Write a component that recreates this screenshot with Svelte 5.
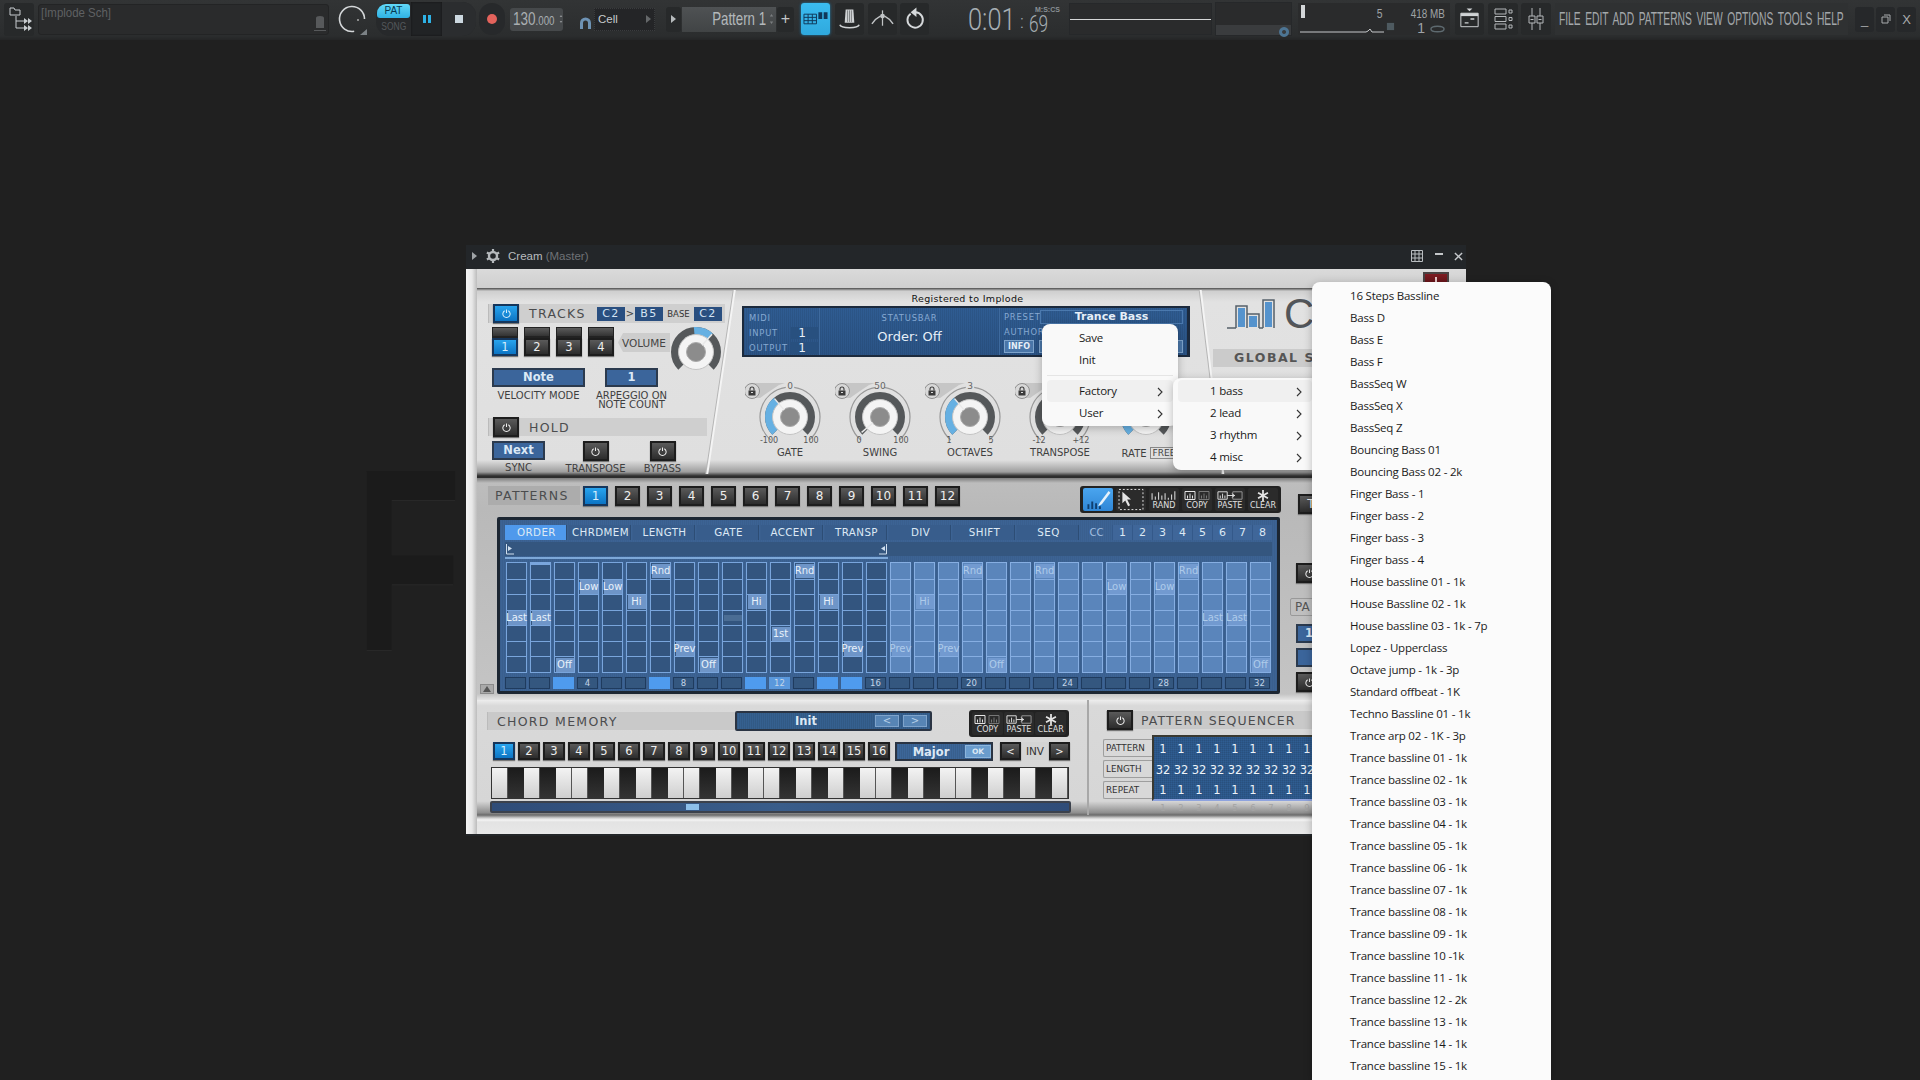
<script>
    const pt = (cx, cy, r, deg) => {
        const a = ((deg - 90) * Math.PI) / 180;
        return [cx + r * Math.cos(a), cy + r * Math.sin(a)];
    };
    const arc = (cx, cy, r, from, to) => {
        const [x0, y0] = pt(cx, cy, r, from);
        const [x1, y1] = pt(cx, cy, r, to);
        return `M${x0.toFixed(2)} ${y0.toFixed(2)}A${r} ${r} 0 ${to - from > 180 ? 1 : 0} 1 ${x1.toFixed(2)} ${y1.toFixed(2)}`;
    };
    const needle = (cx, cy, deg) => {
        const [x0, y0] = pt(cx, cy, 9, deg);
        const [x1, y1] = pt(cx, cy, 24, deg);
        return `M${x0.toFixed(2)} ${y0.toFixed(2)}L${x1.toFixed(2)} ${y1.toFixed(2)}`;
    };

    const knobs = [
        { label: 'GATE', min: '-100', max: '100', top: '0', angle: -40 },
        { label: 'SWING', min: '0', max: '100', top: '50', angle: -130 },
        { label: 'OCTAVES', min: '1', max: '5', top: '3', angle: -40 },
        { label: 'TRANSPOSE', min: '-12', max: '+12', top: '', angle: 0 }
    ];

    // step values: [row, text], one per column
    const steps = [
        [3, 'Last'], [3, 'Last'], [6, 'Off'], [1, 'Low'], [1, 'Low'], [2, 'Hi'], [0, 'Rnd'], [5, 'Prev'],
        [6, 'Off'], [3, ''], [2, 'Hi'], [4, '1st'], [0, 'Rnd'], [2, 'Hi'], [5, 'Prev'], null,
        [5, 'Prev'], [2, 'Hi'], [5, 'Prev'], [0, 'Rnd'], [6, 'Off'], null, [0, 'Rnd'], null,
        null, [1, 'Low'], null, [1, 'Low'], [0, 'Rnd'], [3, 'Last'], [3, 'Last'], [6, 'Off']
    ];
    const rows = [0, 1, 2, 3, 4, 5, 6];
    const lit = [3, 7, 11, 12, 14, 15];
    const tabs = ['ORDER', 'CHRDMEM', 'LENGTH', 'GATE', 'ACCENT', 'TRANSP', 'DIV', 'SHIFT', 'SEQ'];
    const blackKeys = [1, 3, 6, 8, 10];
    const keys = Array.from({ length: 36 }, (_, i) => blackKeys.includes(i % 12));
    const seqCols = [1, 2, 3, 4, 5, 6, 7, 8, 9];

    const presets = [
        '16 Steps Bassline', 'Bass D', 'Bass E', 'Bass F', 'BassSeq W', 'BassSeq X', 'BassSeq Z',
        'Bouncing Bass 01', 'Bouncing Bass 02 - 2k', 'Finger Bass - 1', 'Finger bass - 2', 'Finger bass - 3',
        'Finger bass - 4', 'House bassline 01 - 1k', 'House Bassline 02 - 1k', 'House bassline 03 - 1k - 7p',
        'Lopez - Upperclass', 'Octave jump - 1k - 3p', 'Standard offbeat - 1K', 'Techno Bassline 01 - 1k',
        'Trance arp 02 - 1K - 3p', 'Trance bassline 01 - 1k', 'Trance bassline 02 - 1k', 'Trance bassline 03 - 1k',
        'Trance bassline 04 - 1k', 'Trance bassline 05 - 1k', 'Trance bassline 06 - 1k', 'Trance bassline 07 - 1k',
        'Trance bassline 08 - 1k', 'Trance bassline 09 - 1k', 'Trance bassline 10 -1k', 'Trance bassline 11 - 1k',
        'Trance bassline 12 - 2k', 'Trance bassline 13 - 1k', 'Trance bassline 14 - 1k', 'Trance bassline 15 - 1k'
    ];
</script>

{#snippet power()}
    <svg class="power" viewBox="0 0 12 12">
        <path d="M4 3a4 4 0 1 0 4 0M6 1.5v4" fill="none" stroke="currentColor" stroke-width="1.1" />
    </svg>
{/snippet}

{#snippet dial(cx, cy, angle, from)}
    <path d={arc(cx, cy, 21, -135, 135)} fill="none" stroke="#55585a" stroke-width="8" />
    {#if from !== null}
        <path d={arc(cx, cy, 21, from, angle)} fill="none" stroke="#66b0e2" stroke-width="8" />
    {/if}
    <circle {cx} {cy} r="17.5" fill="#f4f4f4" stroke="#c4c4c4" />
    <circle {cx} {cy} r="9.5" fill="#8c8c8c" stroke="#aaa" />
    <path d={needle(cx, cy, angle)} stroke="#e9e9e9" stroke-width="1.5" />
{/snippet}

{#snippet arrow()}
    <svg class="arrow" viewBox="0 0 6 10"><path d="M1 1l4 4-4 4" fill="none" stroke="#333" stroke-width="1.1" /></svg>
{/snippet}

<div class="screen">
    <header class="toolbar">
        <div class="tb-btn browser">
            <svg viewBox="0 0 30 33">
                <path d="M6 5h4l1 2h5v5H6z" fill="none" stroke="#c9cdd0" />
                <path d="M12 13v12h8M12 18h8" fill="none" stroke="#c9cdd0" />
                <path d="M20 15v6l4-3zM24 15v6l4-3zM20 22v6l4-3zM24 22v6l4-3z" fill="#c9cdd0" />
            </svg>
        </div>
        <div class="hint">
            <span class="hint-text">[Implode Sch]</span>
            <svg class="hint-icon" viewBox="0 0 12 16">
                <path d="M2 13h8V3a4 2 0 0 0-8 0zM0 15h12v1H0z" fill="#57595b" />
            </svg>
        </div>
        <svg class="master" viewBox="0 0 30 34">
            <path d={arc(15, 17, 12.5, 170, 450)} fill="none" stroke="#d4d7d9" stroke-width="1.6" />
            <circle cx="21" cy="18" r="1" fill="#aaa" />
            <path d="M30 27v6h-7z" fill="#7c8286" />
        </svg>
        <div class="transport">
            <div class="patsong">
                <span class="pat">PAT</span>
                <span class="song">SONG</span>
            </div>
            <div class="play">
                <svg viewBox="0 0 10 10"><path d="M1 1h3v8H1zM6 1h3v8H6z" fill="#2eb2e6" /></svg>
            </div>
            <div class="stop"><span></span></div>
        </div>
        <div class="record"><span></span></div>
        <div class="tempo">
            <span class="tempo-num">130<small>.000</small></span>
            <svg viewBox="0 0 6 14"><path d="M3 1l2 3H1zM3 13l2-3H1z" fill="#8e9294" /></svg>
        </div>
        <svg class="magnet" viewBox="0 0 17 14">
            <path d="M3 13V7a5.500 5.500 0 0 1 11 0v6h-3V7a2.500 2.500 0 0 0-5 0v6z" fill="#6e93b5" />
        </svg>
        <div class="cell">
            <span>Cell</span>
            <svg viewBox="0 0 5 8"><path d="M0 0l5 4-5 4z" fill="#65686a" /></svg>
        </div>
        <div class="pat-arrow"><svg viewBox="0 0 5 8"><path d="M0 0l5 4-5 4z" fill="#b6babc" /></svg></div>
        <div class="pattern">
            <span class="pattern-name">Pattern 1</span>
            <svg viewBox="0 0 6 14"><path d="M3 1l2 3H1zM3 13l2-3H1z" fill="#7b7e80" /></svg>
        </div>
        <div class="pat-plus">+</div>
        <div class="tb-btn big on">
            <svg viewBox="0 0 26 16">
                <path d="M1 3h13v10H1zM1 6.300h13M1 9.700h13M5.300 3v10M9.700 3v10" fill="none" stroke="#10385a" />
                <path d="M16 1h4v7h-4zM21.500 1h4v7h-4z" fill="#10385a" />
            </svg>
        </div>
        <div class="tb-btn big gap5">
            <svg viewBox="0 0 26 26">
                <path d="M9 3h8l1 14H8z" fill="#cfd2d4" />
                <path d="M11 4v12M13 4v12M15 4v12" stroke="#7d8082" />
                <path d="M3 19c1 4 19 4 20 0" fill="none" stroke="#cfd2d4" stroke-width="1.6" />
            </svg>
        </div>
        <div class="tb-btn big gap4">
            <svg viewBox="0 0 26 26">
                <path d="M2 18c4-6 7-7 9-8M24 18c-4-6-7-7-9-8" fill="none" stroke="#c1c4c6" stroke-width="1.5" />
                <path d="M13 4v16" stroke="#c1c4c6" stroke-width="1.3" />
                <circle cx="13" cy="10" r="2.500" fill="#c1c4c6" />
            </svg>
        </div>
        <div class="tb-btn big gap3">
            <svg viewBox="0 0 26 26">
                <path d="M9 7.500a8 8 0 1 0 5-1.500" fill="none" stroke="#d6d9db" stroke-width="2" />
                <path d="M15 1v10l-6-5z" fill="#d6d9db" />
            </svg>
        </div>
        <div class="time">
            <span class="time-main">0:01</span>
            <span class="time-colon">:</span>
            <span class="time-cs">69</span>
            <span class="time-unit">M:S:CS</span>
        </div>
        <div class="scope"><span></span></div>
        <div class="scope2">
            <svg viewBox="0 0 12 12"><path d="M6 1a5 5 0 1 0 .1 0zM6 4a2 2 0 1 0 .1 0z" fill="#4d7594" fill-rule="evenodd" /></svg>
        </div>
        <div class="cpu">
            <span class="cpu-bar"></span>
            <span class="cpu-num">5</span>
            <svg class="cpu-chip" viewBox="0 0 10 10"><path d="M1 1h8v8H1z" fill="#4e5a60" /></svg>
            <span class="cpu-mem">418 MB</span>
            <span class="cpu-one">1</span>
            <svg class="cpu-ring" viewBox="0 0 16 8"><ellipse cx="8" cy="4" rx="7" ry="3" fill="none" stroke="#5e6a70" stroke-width="1.500" /></svg>
            <svg class="cpu-line" viewBox="0 0 84 6"><path d="M0 4h66l2-1 2-2 2 3h12" fill="none" stroke="#c5c8ca" /></svg>
        </div>
        <div class="tb-btn big gap5">
            <svg viewBox="0 0 26 26">
                <path d="M10 2h6l-3 3z" fill="#d0d3d5" />
                <path d="M4 7h18v14H4z" fill="none" stroke="#d0d3d5" />
                <path d="M4 7h18v3H4z" fill="#d0d3d5" />
                <path d="M8 17h4M14 13h4" stroke="#d0d3d5" stroke-width="1.500" />
            </svg>
        </div>
        <div class="tb-btn big gap4 w30">
            <svg viewBox="0 0 26 26">
                <path d="M5 3h11v5H5zM5 10.500h11v5H5zM5 18h11v5H5zM19 4h3v3h-3zM19 11.500h3v3h-3zM19 19h3v3h-3z" fill="none" stroke="#b5b8ba" />
            </svg>
        </div>
        <div class="tb-btn big gap3 w30">
            <svg viewBox="0 0 26 26">
                <path d="M9 2v8M17 2v8M9 17v7M17 17v7" stroke="#b5b8ba" />
                <path d="M6 10h6v7H6zM14 10h6v7h-6z" fill="none" stroke="#b5b8ba" />
                <path d="M7.500 13.500h3M15.500 13.500h3" stroke="#b5b8ba" />
            </svg>
        </div>
        <nav class="menubar"><span>FILE EDIT ADD PATTERNS VIEW OPTIONS TOOLS HELP</span></nav>
        <div class="winbtns">
            <span class="wb">_</span>
            <span class="wb">
                <svg viewBox="0 0 10 10"><path d="M1 3h6v6H1zM3 1h6v6" fill="none" stroke="#a8abad" /></svg>
            </span>
            <span class="wb">X</span>
        </div>
    </header>

    <div class="watermark">F</div>

    <section class="window">
        <div class="titlebar">
            <svg class="title-tri" viewBox="0 0 5 8"><path d="M0 0l5 4-5 4z" fill="#a0a4a7" /></svg>
            <svg class="title-gear" viewBox="0 0 14 14">
                <circle cx="7" cy="7" r="4" fill="none" stroke="#b5b9bc" stroke-width="2.400" />
                <path d="M7 0v3M7 11v3M0.900 3.500l2.600 1.500M10.500 9l2.600 1.500M0.900 10.500l2.600-1.500M10.500 5l2.600-1.500" stroke="#b5b9bc" stroke-width="2.200" />
            </svg>
            <span class="title-name">Cream <em>(Master)</em></span>
            <svg class="title-grid" viewBox="0 0 12 12">
                <path d="M.5.5h11v11H.5zM.5 4h11M.5 8h11M4 .5v11M8 .5v11" fill="none" stroke="#b9bdc0" />
            </svg>
            <span class="title-min"></span>
            <svg class="title-close" viewBox="0 0 10 10"><path d="M1 1l8 8M9 1l-8 8" stroke="#c4c7ca" stroke-width="1.600" /></svg>
        </div>

        <div class="plugin">
            <div class="head"><span class="red-btn"><i></i></span></div>

            <div class="main">
                <div class="col-left">
                    <div class="strip tracks-strip">
                        <span class="btn on sq">{@render power()}</span>
                        <span class="strip-label tracks-label">TRACKS</span>
                        <span class="note-box">C2</span>
                        <span class="gt">&gt;</span>
                        <span class="note-box">B5</span>
                        <span class="base">BASE</span>
                        <span class="note-box">C2</span>
                    </div>
                    <div class="tracks-row">
                        {#each [1, 2, 3, 4] as n}
                            <div class="track">
                                <span class="track-led"></span>
                                <span class="btn track-num" class:on={n === 1}>{n}</span>
                            </div>
                        {/each}
                        <span class="volume">VOLUME</span>
                        <svg class="vol-knob" viewBox="0 0 60 60">
                            {@render dial(30, 30, 42, -5)}
                        </svg>
                    </div>
                    <div class="modes">
                        <div class="cell-col w93">
                            <span class="blue-box">Note</span>
                            <span class="caption">VELOCITY MODE</span>
                        </div>
                        <div class="cell-col w53">
                            <span class="blue-box">1</span>
                            <span class="caption">ARPEGGIO ON<br />NOTE COUNT</span>
                        </div>
                    </div>
                    <div class="strip hold-strip">
                        <span class="btn sq tall">{@render power()}</span>
                        <span class="strip-label tracks-label">HOLD</span>
                    </div>
                    <div class="sync-row">
                        <div class="cell-col w53">
                            <span class="blue-box">Next</span>
                            <span class="caption">SYNC</span>
                        </div>
                        <div class="cell-col w27 ml37">
                            <span class="btn sq tall">{@render power()}</span>
                            <span class="caption">TRANSPOSE</span>
                        </div>
                        <div class="cell-col w27 ml40">
                            <span class="btn sq tall">{@render power()}</span>
                            <span class="caption">BYPASS</span>
                        </div>
                    </div>
                </div>

                <div class="col-mid">
                    <div class="registered">Registered to Implode</div>
                    <div class="display">
                        <div class="midi">
                            <span class="disp-label">MIDI</span>
                            <div class="midi-row"><span class="disp-label">INPUT</span><b>1</b></div>
                            <div class="midi-row"><span class="disp-label">OUTPUT</span><b>1</b></div>
                        </div>
                        <div class="status">
                            <span class="disp-label">STATUSBAR</span>
                            <span class="status-text">Order: Off</span>
                        </div>
                        <div class="preset">
                            <div class="preset-row"><span class="disp-label">PRESET</span><span class="preset-name">Trance Bass</span></div>
                            <div class="preset-row"><span class="disp-label">AUTHOR</span></div>
                            <div class="preset-row"><span class="info">INFO</span><span class="info wide"></span></div>
                        </div>
                    </div>
                    <div class="knob-row">
                        {#each knobs as k}
                            <div class="knob">
                                <svg viewBox="0 0 90 64">
                                    <path d="M7 1H40L34 3 25 9 15 16H7z" fill="#c6c6c6" />
                                    <circle cx="7" cy="9" r="7.500" fill="#d8d8d8" stroke="#8f8f8f" />
                                    <path d="M3.500 8.500h7v5h-7z" fill="#3a3a3a" />
                                    <path d="M5 8.500V7a2 2 0 0 1 4 0v1.500" fill="none" stroke="#3a3a3a" stroke-width="1.100" />
                                    <path d="M6 10.500h2" stroke="#ddd" />
                                    <path d={arc(45, 35, 30, -140, -8)} fill="none" stroke="#999" stroke-width="1.200" />
                                    <path d={arc(45, 35, 30, 8, 140)} fill="none" stroke="#999" stroke-width="1.200" />
                                    {@render dial(45, 35, k.angle, k.angle > -100 && k.angle !== 0 ? -135 : null)}
                                    <text class="knob-top" x="45" y="7">{k.top}</text>
                                    <text class="knob-min" x="24" y="61">{k.min}</text>
                                    <text class="knob-min" x="66" y="61">{k.max}</text>
                                </svg>
                                <span class="caption knob-label">{k.label}</span>
                            </div>
                        {/each}
                        <div class="knob">
                            <svg viewBox="0 0 90 64">
                                {@render dial(41, 35, -30, -135)}
                            </svg>
                            <div class="rate"><span class="caption">RATE</span><span class="free">FREE</span></div>
                        </div>
                    </div>
                </div>

                <div class="col-right">
                    <div class="brand">
                        <svg viewBox="0 0 51 31">
                            <path d="M0 30H9M9 30V8H20V30M20 30V16H32V30M36 30V2H47V30" fill="none" stroke="#55606a" stroke-width="1.500" />
                            <path d="M11 10h7v19h-7zM22 18h8v11h-8zM38 4h7v25h-7z" fill="#5593cd" />
                            <path d="M32 30h4" stroke="#55606a" stroke-width="1.500" />
                        </svg>
                        <span>C</span>
                        <i class="brand-cut"></i>
                    </div>
                    <div class="global"><span>GLOBAL SE</span></div>
                </div>
                <i class="slant slant-a"></i>
                <i class="slant slant-b"></i>
            </div>

            <div class="patterns">
                <div class="pat-top">
                    <div class="strip pat-strip"><span class="strip-label">PATTERNS</span></div>
                    <div class="pat-nums">
                        {#each Array.from({ length: 12 }, (_, i) => i + 1) as n}
                            <span class="btn pat-num" class:on={n === 1}>{n}</span>
                        {/each}
                    </div>
                    <div class="tools">
                        <span class="tool pen">
                            <svg viewBox="0 0 28 24">
                                <path d="M3 22v-5h2v5zM7 22v-8h2v8zM11 22v-6h2v6zM15 22v-3h2v3z" fill="#0f3f70" />
                                <path d="M14 19l2-4L25 3l2 2-9 12z" fill="#e7f2fb" />
                            </svg>
                        </span>
                        <span class="tool select">
                            <svg viewBox="0 0 28 24">
                                <path d="M1.500 1.500h25v21h-25z" fill="none" stroke="#e4e4e4" stroke-dasharray="2 2" />
                                <path d="M5 4v12l3-3 3 6 2-1-3-6h4z" fill="#e4e4e4" />
                            </svg>
                        </span>
                        <span class="tool labeled">
                            <svg viewBox="0 0 24 10"><path d="M1 9V3M4 9V6M7 9V2M10 9V5M13 9V3M16 9V7M19 9V4M22 9V1" stroke="#d5d5d5" /></svg>
                            RAND
                        </span>
                        <span class="tool labeled">
                            <svg viewBox="0 0 26 10">
                                <path d="M1 1h10v8H1z" fill="none" stroke="#e4e4e4" />
                                <path d="M15 1h10v8H15z" fill="none" stroke="#777" />
                                <path d="M3.500 8V5M6 8V3M8.500 8V5" stroke="#e4e4e4" />
                                <path d="M17.500 8V5M20 8V3M22.500 8V5" stroke="#777" />
                            </svg>
                            COPY
                        </span>
                        <span class="tool labeled">
                            <svg viewBox="0 0 28 10">
                                <path d="M1 1h10v8H1z" fill="none" stroke="#e4e4e4" />
                                <path d="M17 1h10v8H17z" fill="none" stroke="#999" />
                                <path d="M3.500 8V5M6 8V3M8.500 8V5M11 5h8M16 3l3 2-3 2" fill="none" stroke="#e4e4e4" />
                            </svg>
                            PASTE
                        </span>
                        <span class="tool labeled">
                            <svg viewBox="0 0 12 10"><path d="M6 0v10M1.500 2.500l9 5M10.500 2.500l-9 5" stroke="#e4e4e4" stroke-width="1.600" /></svg>
                            CLEAR
                        </span>
                    </div>
                    <span class="btn stub stub-t">T</span>
                </div>

                <div class="seq-row">
                    <span class="scroll-up"><svg viewBox="0 0 8 6"><path d="M4 0l4 6H0z" fill="#555" /></svg></span>
                    <div class="seq">
                        <div class="tabs">
                            {#each tabs as t, i}
                                <span class="tab" class:active={i === 0}>{t}</span>
                            {/each}
                            <span class="cc">CC</span>
                            {#each [1, 2, 3, 4, 5, 6, 7, 8] as c}
                                <span class="cc-cell">{c}</span>
                            {/each}
                        </div>
                        <div class="range">
                            <svg class="mark" viewBox="0 0 10 14">
                                <path d="M1.500 2v10H9" fill="none" stroke="#cfdeee" />
                                <path d="M3 4v5l4-2.500z" fill="#cfdeee" />
                            </svg>
                            <svg class="mark mark-end" viewBox="0 0 10 14">
                                <path d="M8.500 2v10H1" fill="none" stroke="#cfdeee" />
                                <path d="M7 4v5L3 6.500z" fill="#cfdeee" />
                            </svg>
                        </div>
                        <div class="range-line"></div>
                        <div class="columns">
                            {#each steps as s, c}
                                <div class="col" class:second={c >= 16}>
                                    {#if c === 1}<i class="col-top"></i>{/if}
                                    {#each rows as r}
                                        <div class="step">
                                            {#if s && s[0] === r}
                                                <span class="val" class:faint={s[1] === ''}>{s[1]}</span>
                                            {/if}
                                        </div>
                                    {/each}
                                </div>
                            {/each}
                        </div>
                        <div class="bottom">
                            {#each steps as _, c}
                                <span class="bot" class:lit={lit.includes(c + 1)} class:twelve={c === 11}>
                                    {(c + 1) % 4 === 0 ? c + 1 : ''}
                                </span>
                            {/each}
                        </div>
                    </div>
                    <div class="side">
                        <span class="btn stub">{@render power()}</span>
                        <span class="side-label">PA</span>
                        <span class="blue-box stub-box">1</span>
                        <span class="blue-box stub-box"></span>
                        <span class="btn stub">{@render power()}</span>
                    </div>
                </div>
            </div>

            <div class="chord">
                <div class="chord-left">
                    <div class="chord-top">
                        <div class="strip chord-strip"><span class="strip-label">CHORD MEMORY</span></div>
                        <div class="init">
                            <span class="init-name">Init</span>
                            <span class="init-btn">&lt;</span>
                            <span class="init-btn">&gt;</span>
                        </div>
                        <div class="tools chord-tools">
                            <span class="tool labeled">
                                <svg viewBox="0 0 26 10">
                                    <path d="M1 1h10v8H1z" fill="none" stroke="#e4e4e4" />
                                    <path d="M15 1h10v8H15z" fill="none" stroke="#777" />
                                    <path d="M3.500 8V5M6 8V3M8.500 8V5" stroke="#e4e4e4" />
                                    <path d="M17.500 8V5M20 8V3M22.500 8V5" stroke="#777" />
                                </svg>
                                COPY
                            </span>
                            <span class="tool labeled">
                                <svg viewBox="0 0 28 10">
                                    <path d="M1 1h10v8H1z" fill="none" stroke="#e4e4e4" />
                                    <path d="M17 1h10v8H17z" fill="none" stroke="#999" />
                                    <path d="M3.500 8V5M6 8V3M8.500 8V5M11 5h8M16 3l3 2-3 2" fill="none" stroke="#e4e4e4" />
                                </svg>
                                PASTE
                            </span>
                            <span class="tool labeled">
                                <svg viewBox="0 0 12 10"><path d="M6 0v10M1.500 2.500l9 5M10.500 2.500l-9 5" stroke="#e4e4e4" stroke-width="1.600" /></svg>
                                CLEAR
                            </span>
                        </div>
                    </div>
                    <div class="chord-nums">
                        {#each Array.from({ length: 16 }, (_, i) => i + 1) as n}
                            <span class="btn chord-num" class:on={n === 1}>{n}</span>
                        {/each}
                        <div class="major"><span>Major</span><span class="ok">OK</span></div>
                        <div class="inv">
                            <span class="btn inv-btn">&lt;</span>
                            <span class="inv-text">INV</span>
                            <span class="btn inv-btn">&gt;</span>
                        </div>
                    </div>
                    <div class="keyboard">
                        {#each keys as black}
                            <span class="key" class:black></span>
                        {/each}
                    </div>
                    <div class="slider"><span></span></div>
                </div>

                <div class="chord-right">
                    <div class="strip seq-strip">
                        <span class="btn sq tall">{@render power()}</span>
                        <span class="strip-label">PATTERN SEQUENCER</span>
                    </div>
                    <div class="pseq">
                        <div class="pseq-labels">
                            <span>PATTERN</span>
                            <span>LENGTH</span>
                            <span>REPEAT</span>
                        </div>
                        <div class="pseq-grid">
                            {#each seqCols as c}<span>1</span>{/each}
                            {#each seqCols as c}<span>32</span>{/each}
                            {#each seqCols as c}<span>1</span>{/each}
                        </div>
                    </div>
                    <div class="pseq-nums">
                        {#each seqCols as c}<span>{c}</span>{/each}
                    </div>
                </div>
            </div>

            <div class="foot"></div>
        </div>
    </section>

    <div class="menu menu-root">
        <div class="item">Save</div>
        <div class="item">Init</div>
        <div class="sep"></div>
        <div class="item hot">Factory {@render arrow()}</div>
        <div class="item">User {@render arrow()}</div>
    </div>
    <div class="menu menu-sub">
        <div class="item hot">1 bass {@render arrow()}</div>
        <div class="item">2 lead {@render arrow()}</div>
        <div class="item">3 rhythm {@render arrow()}</div>
        <div class="item">4 misc {@render arrow()}</div>
    </div>
    <div class="menu menu-list">
        {#each presets as p}
            <div class="item">{p}</div>
        {/each}
    </div>
</div>

<style>
    :global(body) {
        margin: 0;
        background: #202020;
    }

    .screen {
        position: relative;
        width: 1920px;
        height: 1080px;
        overflow: hidden;
        background: #202020;
        font-family: "Liberation Sans", sans-serif;
    }

    /* toolbar */
    .toolbar {
        display: flex;
        align-items: center;
        box-sizing: border-box;
        width: 1920px;
        height: 40px;
        padding: 0 0 2px 4px;
        background: linear-gradient(#323435, #2b2d2e 90%, #242526);
        color: #a8acae;
    }

    .tb-btn {
        flex: none;
        box-sizing: border-box;
        background: #27292a;
        border-radius: 3px;
    }

    .tb-btn svg {
        display: block;
        width: 100%;
        height: 100%;
    }

    .browser {
        width: 30px;
        height: 33px;
    }

    .hint {
        display: flex;
        justify-content: space-between;
        box-sizing: border-box;
        width: 291px;
        height: 31px;
        margin-left: 4px;
        padding: 1px 2px 3px 2px;
        background: #2a2b2c;
        border: 1px solid #232425;
        border-radius: 3px;
    }

    .hint-text {
        font-size: 13px;
        line-height: 14px;
        color: #5f6163;
        display: inline-block;
        transform: scaleX(.88);
        transform-origin: left;
    }

    .hint-icon {
        align-self: flex-end;
        width: 12px;
        height: 16px;
    }

    .master {
        width: 30px;
        height: 34px;
        margin-left: 8px;
        flex: none;
    }

    .transport {
        display: flex;
        width: 100px;
        height: 34px;
        margin-left: 9px;
        background: #27292b;
        border-radius: 14px;
        flex: none;
    }

    .patsong {
        display: flex;
        flex-direction: column;
        align-items: center;
        width: 35px;
        padding-top: 2px;
        font-size: 10px;
    }

    .pat {
        width: 33px;
        height: 14px;
        line-height: 14px;
        text-align: center;
        color: #073a52;
        background: linear-gradient(#62d8f8, #2fb2e4);
        border-radius: 9px 3px 3px 3px;
    }

    .song {
        margin-top: 3px;
        color: #54585b;
        transform: scaleX(.85);
    }

    .play {
        display: grid;
        place-items: center;
        width: 31px;
        background: #212325;
        box-shadow: inset 0 0 2px #111;
    }

    .play svg {
        width: 10px;
        height: 10px;
    }

    .stop {
        display: grid;
        place-items: center;
        flex: 1;
        border-radius: 0 14px 14px 0;
        background: #2b2d2f;
    }

    .stop span {
        width: 8px;
        height: 8px;
        background: #ccd8e0;
    }

    .record {
        display: grid;
        place-items: center;
        width: 26px;
        height: 32px;
        margin-left: 3px;
        background: #27292b;
        border-radius: 13px;
        flex: none;
    }

    .record span {
        width: 10px;
        height: 10px;
        border-radius: 50%;
        background: #e4635c;
    }

    .tempo {
        display: flex;
        align-items: center;
        box-sizing: border-box;
        width: 53px;
        height: 23px;
        margin-left: 5px;
        padding-left: 3px;
        background: #46494b;
        border-radius: 3px;
        flex: none;
    }

    .tempo-num {
        display: inline-block;
        width: 46px;
        font-size: 18px;
        color: #a9aeb1;
        white-space: nowrap;
        transform: scaleX(.75);
        transform-origin: left;
    }

    .tempo-num small {
        font-size: 13px;
    }

    .tempo svg {
        width: 5px;
        height: 14px;
    }

    .magnet {
        flex: none;
        width: 17px;
        height: 14px;
        margin: 8px 0 0 14px;
    }

    .cell {
        display: flex;
        align-items: center;
        justify-content: space-between;
        box-sizing: border-box;
        width: 61px;
        height: 23px;
        padding: 0 3px;
        background: #242527;
        border: 1px dotted #3a3c3e;
        font-size: 11.500px;
        color: #c7cacc;
        flex: none;
    }

    .cell svg {
        width: 5px;
        height: 8px;
    }

    .pat-arrow,
    .pat-plus {
        display: grid;
        place-items: center;
        height: 25px;
        background: #27292a;
        border-radius: 3px;
        flex: none;
    }

    .pat-arrow {
        width: 15px;
        margin-left: 11px;
    }

    .pat-arrow svg {
        width: 5px;
        height: 8px;
    }

    .pat-plus {
        width: 17px;
        margin-left: 1px;
        font-size: 16px;
        color: #c3c6c8;
    }

    .pattern {
        display: flex;
        align-items: center;
        justify-content: flex-end;
        box-sizing: border-box;
        width: 94px;
        height: 25px;
        margin-left: 1px;
        padding-right: 2px;
        background: linear-gradient(#4f5254, #414445);
        flex: none;
    }

    .pattern-name {
        margin-right: 3px;
        font-size: 19px;
        color: #b3b8bb;
        white-space: nowrap;
        transform: scaleX(.7);
        transform-origin: right;
    }

    .pattern svg {
        width: 5px;
        height: 14px;
    }

    .big {
        width: 29px;
        height: 32px;
        padding: 3px 2px;
        margin-left: 5px;
    }

    .big.on {
        margin-left: 7px;
        padding: 8px 2px;
        background: linear-gradient(#3bbcf0, #2fa9de);
        box-shadow: 0 0 3px #1e7fb0;
    }

    .gap5 {
        margin-left: 5px;
    }

    .gap4 {
        margin-left: 4px;
    }

    .gap3 {
        margin-left: 3px;
    }

    .w30 {
        width: 30px;
    }

    .time {
        position: relative;
        display: flex;
        align-items: center;
        box-sizing: border-box;
        width: 129px;
        height: 32px;
        margin-left: 5px;
        padding-left: 34px;
        font-family: Roboto, sans-serif;
        font-weight: 300;
        color: #a6aeb3;
        flex: none;
    }

    .time-main {
        width: 52px;
        font-size: 31px;
        white-space: nowrap;
        transform: scaleX(.82);
        transform-origin: left;
    }

    .time-colon {
        width: 9px;
        margin-top: 5px;
        font-size: 18px;
    }

    .time-cs {
        width: 20px;
        margin-top: 10px;
        font-size: 24px;
        line-height: 18px;
        white-space: nowrap;
        transform: scaleX(.72);
        transform-origin: left;
    }

    .time-unit {
        position: absolute;
        top: 3px;
        left: 101px;
        font-family: "Liberation Sans", sans-serif;
        font-size: 7px;
        line-height: 8px;
        font-weight: bold;
        color: #8a9094;
    }

    .scope {
        display: flex;
        align-items: center;
        width: 143px;
        height: 32px;
        margin-left: 6px;
        background: #2a2b2c;
        border: 1px solid #26282a;
        box-sizing: border-box;
        flex: none;
    }

    .scope span {
        width: 100%;
        height: 1px;
        background: #d4d6d7;
    }

    .scope2 {
        display: flex;
        align-items: flex-end;
        justify-content: flex-end;
        box-sizing: border-box;
        width: 77px;
        height: 34px;
        margin-left: 3px;
        padding: 0 1px 0 0;
        background: linear-gradient(#2a2b2c 70%, #3a3c3e 70%);
        border: 1px solid #26282a;
        flex: none;
    }

    .scope2 svg {
        width: 12px;
        height: 12px;
        margin-bottom: -3px;
    }

    .cpu {
        position: relative;
        width: 152px;
        height: 32px;
        margin-left: 6px;
        background: #2a2b2c;
        font-size: 13px;
        line-height: 13px;
        color: #9fa3a6;
        flex: none;
    }

    .cpu > * {
        position: absolute;
    }

    .cpu-bar {
        left: 3px;
        top: 2px;
        width: 4px;
        height: 13px;
        background: #d3d6d8;
    }

    .cpu-num {
        left: 78px;
        top: 4px;
        transform: scaleX(.8);
    }

    .cpu-chip {
        left: 88px;
        top: 19px;
        width: 9px;
        height: 9px;
    }

    .cpu-mem {
        right: 5px;
        top: 4px;
        white-space: nowrap;
        transform: scaleX(.76);
        transform-origin: right;
    }

    .cpu-one {
        right: 25px;
        top: 19px;
        font-size: 14px;
        line-height: 12px;
    }

    .cpu-ring {
        right: 5px;
        top: 22px;
        width: 15px;
        height: 8px;
    }

    .cpu-line {
        left: 2px;
        top: 25px;
        width: 84px;
        height: 6px;
    }

    .menubar {
        box-sizing: border-box;
        width: 293px;
        height: 32px;
        margin-left: 4px;
        padding-left: 4px;
        background: #2f3132;
        line-height: 32px;
        font-size: 18px;
        color: #a3a7aa;
        white-space: nowrap;
        flex: none;
    }

    .menubar span {
        display: inline-block;
        transform: scaleX(.57);
        transform-origin: left;
        word-spacing: 3px;
    }

    .winbtns {
        display: flex;
        gap: 2px;
        margin-left: 7px;
        flex: none;
    }

    .wb {
        display: grid;
        place-items: center;
        width: 19px;
        height: 25px;
        background: #26282a;
        border-radius: 3px;
        font-size: 13px;
        color: #a8abad;
    }

    .wb svg {
        width: 10px;
        height: 10px;
    }

    /* faint logo behind the window */
    .watermark {
        position: absolute;
        left: 355px;
        top: 410px;
        width: 124px;
        font-size: 260px;
        font-weight: bold;
        line-height: 300px;
        color: #1b1b1b;
        transform: scaleX(.67);
        transform-origin: left;
        text-shadow: 0 1px 0 #282828;
    }

    /* plugin window */
    .window {
        position: absolute;
        left: 466px;
        top: 245px;
        width: 1000px;
        height: 591px;
        background: #232629;
    }

    .titlebar {
        display: flex;
        align-items: center;
        box-sizing: border-box;
        height: 24px;
        padding: 0 0 2px 6px;
        font-size: 11.500px;
        color: #b9bcbf;
    }

    .title-tri {
        width: 5px;
        height: 8px;
    }

    .title-gear {
        width: 14px;
        height: 14px;
        margin-left: 9px;
    }

    .title-name {
        margin-left: 8px;
    }

    .title-name em {
        font-style: normal;
        color: #6f7276;
    }

    .title-grid {
        width: 12px;
        height: 12px;
        margin-left: auto;
    }

    .title-min {
        width: 8px;
        height: 2px;
        margin: -4px 0 0 12px;
        background: #c4c7ca;
    }

    .title-close {
        width: 9px;
        height: 9px;
        margin: 0 3px 0 11px;
    }

    .plugin {
        display: flex;
        flex-direction: column;
        width: 1000px;
        height: 565px;
        box-sizing: border-box;
        padding-left: 11px;
        background: linear-gradient(90deg, #f4f4f4 0, #e8e8e8 6px, #bcbcbc 11px);
        font-family: "DejaVu Sans", sans-serif;
    }

    .head {
        display: flex;
        justify-content: flex-end;
        box-sizing: border-box;
        height: 19px;
        padding: 3px 17px 0 0;
        background: linear-gradient(#dadada, #cfcfcf);
    }

    .red-btn {
        display: flex;
        justify-content: center;
        width: 26px;
        height: 16px;
        background: linear-gradient(#7f1c22, #5b1116);
        border: 2px solid #4a4242;
        box-sizing: border-box;
    }

    .red-btn i {
        width: 2px;
        height: 6px;
        margin-top: 3px;
        background: #e6c8c8;
    }

    .strip {
        display: flex;
        align-items: center;
        background: #cfcfcf;
        border-left: 1px solid #bbb;
    }

    .strip-label {
        font-size: 12.500px;
        letter-spacing: 1.300px;
        color: #4b4c4e;
    }

    .btn {
        display: grid;
        place-items: center;
        box-sizing: border-box;
        background: linear-gradient(#5a5a5a, #2c2c2c);
        border: 2px solid #1d1d1d;
        box-shadow: 0 1px 1px #777;
        color: #eee;
        font-size: 12px;
        flex: none;
    }

    .btn.on {
        background: linear-gradient(#28a4ee, #0c74c4);
        border-color: #15365c;
        color: #d7eefc;
    }

    .sq {
        width: 26px;
        height: 19px;
    }

    .tall {
        height: 20px;
    }

    .power {
        width: 11px;
        height: 11px;
    }

    .main {
        position: relative;
        display: flex;
        box-sizing: border-box;
        height: 190px;
        background: linear-gradient(#4b4b4b 0, #cfcfcf 3px, #e2e2e2 14px, #dfdfdf 172px, #9d9d9d 184px, #2d2d2d 188px);
    }

    .col-left {
        width: 258px;
        flex: none;
        padding: 16px 0 0 11px;
        box-sizing: border-box;
    }

    .tracks-strip {
        width: 237px;
        height: 19px;
        padding-left: 4px;
        box-sizing: border-box;
    }

    .tracks-label {
        width: 68px;
        margin-left: 10px;
    }

    .note-box {
        width: 28px;
        height: 14px;
        line-height: 14px;
        text-align: center;
        background: #2a4f80;
        color: #d5e4f4;
        font-size: 11px;
        letter-spacing: 1.500px;
        flex: none;
    }

    .gt {
        width: 10px;
        text-align: center;
        font-size: 10px;
        color: #444;
        flex: none;
    }

    .base {
        width: 31px;
        text-align: center;
        font-size: 8.500px;
        color: #333;
        flex: none;
    }

    .tracks-row {
        display: flex;
        gap: 6px;
        height: 29px;
        margin-top: 4px;
        padding-left: 4px;
    }

    .track {
        display: flex;
        flex-direction: column;
        gap: 1px;
        width: 26px;
        height: 29px;
        background: #222;
    }

    .track-led {
        height: 9px;
        margin: 1px;
        background: linear-gradient(#5b5b5b, #333);
    }

    .track-num {
        flex: 1;
        font-size: 11.500px;
    }

    .volume {
        display: grid;
        place-items: center;
        flex: none;
        width: 52px;
        height: 19px;
        margin: 6px 0 0 -2px;
        background: #cdcdcd;
        clip-path: polygon(5px 0, 100% 0, 100% 100%, 5px 100%, 0 50%);
        font-size: 10.500px;
        color: #444;
    }

    .vol-knob {
        flex: none;
        width: 60px;
        height: 60px;
        margin: -5px 0 -26px -10px;
    }

    .modes {
        display: flex;
        gap: 20px;
        height: 50px;
        margin-top: 12px;
        padding-left: 4px;
    }

    .cell-col {
        display: flex;
        flex-direction: column;
        align-items: center;
        flex: none;
    }

    .w93 {
        width: 93px;
    }

    .w53 {
        width: 53px;
    }

    .w27 {
        width: 27px;
    }

    .ml37 {
        margin-left: 37px;
    }

    .ml40 {
        margin-left: 40px;
    }

    .blue-box {
        box-sizing: border-box;
        width: 100%;
        height: 19px;
        line-height: 15px;
        text-align: center;
        background: #3b659b;
        border: 2px solid #2b3a4e;
        font-size: 11.500px;
        font-weight: bold;
        color: #dbe9f6;
    }

    .caption {
        margin-top: 4px;
        font-size: 10px;
        line-height: 9px;
        text-align: center;
        white-space: nowrap;
        color: #3f3f3f;
    }

    .hold-strip {
        width: 219px;
        height: 18px;
        padding-left: 4px;
        box-sizing: border-box;
    }

    .sync-row {
        display: flex;
        margin-top: 5px;
        padding-left: 4px;
    }

    .sync-row .caption {
        margin-top: 3px;
    }

    .col-mid {
        width: 465px;
        flex: none;
        padding-top: 4px;
        box-sizing: border-box;
    }

    .registered {
        height: 14px;
        line-height: 13px;
        text-align: center;
        font-size: 9.500px;
        letter-spacing: .35px;
        color: #111;
    }

    .display {
        display: grid;
        grid-template-columns: 76px 180px 1fr;
        box-sizing: border-box;
        width: 448px;
        height: 51px;
        margin-left: 7px;
        background:
            repeating-linear-gradient(90deg, rgba(0, 0, 0, .07) 0 1px, transparent 1px 2px),
            linear-gradient(#2f5c92, #2b5486);
        border: 2px solid #1c2a3d;
        border-right-width: 3px;
        color: #e6eff8;
    }

    .disp-label {
        font-size: 8.400px;
        letter-spacing: .8px;
        color: #86a9d2;
    }

    .midi {
        display: flex;
        flex-direction: column;
        gap: 4px;
        padding: 5px 0 0 5px;
        border-right: 1px solid #3e6a9e;
    }

    .midi-row {
        display: flex;
        align-items: center;
        justify-content: space-between;
        height: 11px;
    }

    .midi-row b {
        width: 22px;
        margin-right: 1px;
        padding-right: 5px;
        box-sizing: content-box;
        background: #28507f;
        font-size: 12px;
        line-height: 12px;
        font-weight: normal;
        text-align: center;
    }

    .status {
        display: flex;
        flex-direction: column;
        align-items: center;
        padding-top: 5px;
        border-right: 1px solid #3e6a9e;
    }

    .status-text {
        margin-top: 6px;
        font-size: 13px;
    }

    .preset {
        display: flex;
        flex-direction: column;
        gap: 2px;
        padding: 2px 4px 0 4px;
    }

    .preset-row {
        display: flex;
        align-items: center;
        height: 13px;
    }

    .preset-row .disp-label {
        flex: none;
        width: 32px;
        white-space: nowrap;
    }

    .preset-name {
        flex: 1;
        margin-left: 4px;
        border: 1px solid #4b79ae;
        font-size: 11px;
        font-weight: bold;
        line-height: 12px;
        text-align: center;
    }

    .info {
        height: 11px;
        padding: 0 3px;
        background: #4a76a8;
        border: 1px solid #7ea3cb;
        font-size: 8px;
        font-weight: bold;
        line-height: 11px;
    }

    .info.wide {
        flex: 1;
        margin-left: 5px;
    }

    .knob-row {
        display: flex;
        margin: 25px 0 0 10px;
    }

    .knob {
        display: flex;
        flex-direction: column;
        align-items: center;
        width: 90px;
        flex: none;
    }

    .knob svg {
        width: 90px;
        height: 64px;
    }

    .caption.knob-label {
        margin-top: 2px;
    }

    .knob-top {
        font-size: 9px;
        fill: #666;
        text-anchor: middle;
    }

    .knob-min {
        font-size: 8px;
        fill: #555;
        text-anchor: middle;
    }

    .rate {
        display: flex;
        align-items: center;
        gap: 3px;
        margin-top: 1px;
    }

    .rate .caption {
        margin-top: 0;
    }

    .free {
        padding: 0 2px;
        border: 1px solid #888;
        font-size: 9px;
        line-height: 10px;
        color: #444;
    }

    .col-right {
        flex: 1;
        padding-top: 10px;
    }

    .brand {
        display: flex;
        align-items: center;
        margin-left: 27px;
    }

    .brand svg {
        width: 51px;
        height: 31px;
    }

    .brand span {
        margin-left: 6px;
        font-family: "Liberation Sans", sans-serif;
        font-size: 42px;
        line-height: 31px;
        color: #53565a;
    }

    .brand-cut {
        width: 8px;
        height: 30px;
        margin-left: 5px;
        background: #53565a;
    }

    .global {
        height: 18px;
        margin: 20px 0 0 13px;
        padding-left: 21px;
        background: #cbcbcb;
        font-size: 12.500px;
        font-weight: bold;
        letter-spacing: 1.500px;
        line-height: 18px;
        color: #555;
        white-space: nowrap;
    }

    .slant {
        position: absolute;
        top: 2px;
        bottom: 4px;
        width: 2px;
        background: #f4f4f4;
        box-shadow: -1px 0 0 #b5b5b5;
    }

    .slant-a {
        left: 243px;
        transform: skewX(-8.500deg);
    }

    .slant-b {
        left: 734px;
        transform: skewX(7deg);
    }

    .patterns {
        height: 222px;
        background: linear-gradient(#7d7d7d 0, #bdbdbd 5px, #b9b9b9 30px, #c4c4c4 216px, #e4e4e4 222px);
    }

    .pat-top {
        display: flex;
        height: 31px;
        padding: 8px 0 0 10px;
    }

    .pat-strip {
        width: 93px;
        height: 19px;
        box-sizing: border-box;
        padding-left: 7px;
        background: #acacac;
    }

    .pat-nums {
        display: flex;
        gap: 7px;
        margin-left: 3px;
    }

    .pat-num {
        width: 25px;
        height: 20px;
    }

    .tools {
        display: flex;
        gap: 3px;
        height: 27px;
        box-sizing: border-box;
        margin-left: 120px;
        padding: 2px 3px;
        background: #222;
        border-radius: 3px;
        flex: none;
    }

    .tool {
        display: flex;
        flex-direction: column;
        align-items: center;
        justify-content: center;
        width: 30px;
        background: #2b2b2b;
        border-radius: 2px;
        font-size: 8px;
        line-height: 9px;
        color: #e0e0e0;
        flex: none;
    }

    .tool svg {
        height: 11px;
        width: 26px;
    }

    .tool.pen {
        background: linear-gradient(#4aa5ef, #2f86d6);
    }

    .tool.pen svg,
    .tool.select svg {
        width: 28px;
        height: 23px;
    }

    .stub {
        width: 26px;
        height: 20px;
    }

    .stub-t {
        margin: 8px 0 0 17px;
    }

    .seq-row {
        display: flex;
        align-items: flex-start;
        margin-left: 3px;
    }

    .scroll-up {
        display: grid;
        place-items: center;
        width: 14px;
        height: 10px;
        margin-top: 167px;
        background: #a9a9a9;
        border: 1px solid #8b8b8b;
        box-sizing: border-box;
    }

    .scroll-up svg {
        width: 8px;
        height: 6px;
    }

    .seq {
        box-sizing: border-box;
        width: 783px;
        height: 177px;
        margin-left: 3px;
        padding: 5px 0 0 5px;
        background:
            repeating-linear-gradient(90deg, rgba(0, 0, 0, .04) 0 1px, transparent 1px 2px),
            #3c6394;
        border: 3px solid #1c2632;
        border-radius: 2px;
    }

    .tabs {
        display: flex;
        height: 15px;
    }

    .tab {
        width: 62px;
        margin-right: 2px;
        padding-left: 2px;
        border-right: 1px solid #2d4d75;
        box-sizing: border-box;
        background: #385d8c;
        font-size: 10.300px;
        line-height: 15px;
        text-align: center;
        letter-spacing: .4px;
        color: #dde9f5;
    }

    .tab.active {
        background: #4f99ec;
    }

    .cc {
        width: 31px;
        font-size: 10px;
        line-height: 15px;
        text-align: center;
        color: #a2c0e0;
    }

    .cc-cell {
        width: 20px;
        border-left: 1px solid #34598a;
        box-sizing: border-box;
        background: #3f6699;
        font-size: 11px;
        line-height: 15px;
        text-align: center;
        color: #dde9f5;
    }

    .range {
        display: flex;
        width: 767px;
        height: 14px;
        margin-top: 2px;
        background: #34567f;
    }

    .mark {
        width: 10px;
        height: 14px;
        flex: none;
    }

    .mark-end {
        margin-left: 363px;
    }

    .range-line {
        width: 383px;
        height: 2px;
        margin-top: 1px;
        background: #7da8d8;
    }

    .columns,
    .bottom {
        display: grid;
        grid-template-columns: repeat(32, 21px);
        column-gap: 3px;
    }

    .columns {
        height: 111px;
        margin: 3px 0 0 1px;
    }

    .col {
        position: relative;
        display: grid;
        grid-template-rows: repeat(7, 1fr);
        box-sizing: border-box;
        background: #33557f;
        border: 1px solid #79a5dc;
    }

    .col.second {
        background: #5a85bb;
        border-color: #86aee2;
    }

    .col-top {
        position: absolute;
        top: -1px;
        left: 0;
        right: 0;
        height: 3px;
        background: #79a5dc;
    }

    .step {
        display: flex;
        align-items: center;
        justify-content: center;
        min-width: 0;
        border-top: 1px solid #79a5dc;
    }

    .step:first-child {
        border-top: 0;
    }

    .second .step {
        border-color: #86aee2;
    }

    .val {
        flex: none;
        width: 18px;
        height: 14px;
        display: flex;
        justify-content: center;
        background: #6e95c8;
        font-size: 10px;
        line-height: 13px;
        white-space: nowrap;
        color: #e8f1fa;
    }

    .val.faint {
        background: #4b6d94;
        height: 6px;
    }

    .second .val {
        background: #729ad0;
        color: #aecbea;
    }

    .bottom {
        height: 12px;
        margin-top: 4px;
    }

    .bot {
        box-sizing: border-box;
        border: 1px solid #1f3b5e;
        background: #34577f;
        font-size: 8.500px;
        line-height: 10px;
        text-align: center;
        color: #c3d5e8;
    }

    .bot.lit {
        background: #4f9bee;
        border-color: #4f9bee;
    }

    .bot.twelve {
        background: #5a98dc;
        border-color: #5a98dc;
    }

    .side {
        display: flex;
        flex-direction: column;
        gap: 0;
        width: 26px;
        margin-left: 16px;
        padding-top: 46px;
    }

    .side-label {
        height: 16px;
        margin: 15px 0 8px -6px;
        padding-left: 4px;
        border: 1px solid #999;
        border-radius: 2px;
        font-size: 12px;
        line-height: 16px;
        color: #555;
    }

    .stub-box {
        margin-bottom: 5px;
    }

    .chord {
        display: flex;
        height: 115px;
        background: linear-gradient(#ededed, #d9d9d9 5%, #d6d6d6 88%, #8e8e8e 98%, #6b6b6b);
    }

    .chord-left {
        width: 610px;
        flex: none;
        box-sizing: border-box;
        padding: 11px 0 0 0;
    }

    .chord-top {
        display: flex;
        height: 30px;
        margin-left: 10px;
    }

    .chord-strip {
        width: 248px;
        height: 18px;
        margin-top: 1px;
        box-sizing: border-box;
        padding-left: 9px;
        background: #c9c9c9;
        flex: none;
    }

    .init {
        display: flex;
        align-items: center;
        gap: 4px;
        box-sizing: border-box;
        width: 197px;
        height: 20px;
        padding-right: 3px;
        background:
            repeating-linear-gradient(90deg, rgba(0, 0, 0, .07) 0 1px, transparent 1px 2px),
            #35608f;
        border: 2px solid #2a3443;
        border-radius: 2px;
        flex: none;
    }

    .init-name {
        flex: 1;
        padding-left: 4px;
        text-align: center;
        font-size: 11.500px;
        font-weight: bold;
        color: #dce8f4;
    }

    .init-btn {
        width: 24px;
        height: 12px;
        background: #5785b5;
        border: 1px solid #7ea3cb;
        box-sizing: border-box;
        font-size: 10px;
        line-height: 10px;
        text-align: center;
        color: #b6d0e8;
    }

    .chord-tools {
        gap: 1px;
        width: 100px;
        margin-left: 37px;
        margin-top: -1px;
    }

    .chord-tools .tool {
        flex: 1;
        width: auto;
    }

    .chord-nums {
        display: flex;
        align-items: flex-start;
        gap: 3px;
        margin: 1px 0 0 16px;
        height: 26px;
    }

    .chord-num {
        width: 22px;
        height: 18px;
        font-size: 11.500px;
    }

    .major {
        display: flex;
        align-items: center;
        box-sizing: border-box;
        width: 98px;
        height: 19px;
        margin-left: 2px;
        background:
            repeating-linear-gradient(90deg, rgba(0, 0, 0, .07) 0 1px, transparent 1px 2px),
            #3c6698;
        border: 2px solid #2a3443;
        font-size: 11.500px;
        font-weight: bold;
        color: #dce8f4;
    }

    .major span:first-child {
        flex: 1;
        text-align: center;
    }

    .ok {
        width: 26px;
        height: 13px;
        background: #6a9ccd;
        border: 1px solid #8cb5dc;
        box-sizing: border-box;
        font-size: 7.500px;
        line-height: 11px;
        text-align: center;
    }

    .inv {
        display: flex;
        box-sizing: border-box;
        width: 70px;
        height: 18px;
        margin-left: 4px;
        background: linear-gradient(90deg, #2a2a2a 30%, #d4d4d4 30%, #d4d4d4 70%, #2a2a2a 70%);
        flex: none;
    }

    .inv-btn {
        width: 21px;
        height: 18px;
        font-size: 10px;
    }

    .inv-text {
        flex: 1;
        font-size: 10.500px;
        line-height: 18px;
        text-align: center;
        color: #333;
    }

    .keyboard {
        display: grid;
        grid-template-columns: repeat(36, 16px);
        width: 576px;
        height: 30px;
        margin-left: 15px;
        outline: 1px solid #333;
    }

    .key {
        box-sizing: border-box;
        background: linear-gradient(#f3f3f3, #cfcfcf);
        border-right: 1px solid #555;
    }

    .key.black {
        background: linear-gradient(#1b1b1b, #333);
        border-right: 0;
    }

    .slider {
        display: flex;
        align-items: center;
        box-sizing: border-box;
        width: 581px;
        height: 12px;
        margin: 3px 0 0 13px;
        padding-left: 194px;
        background: linear-gradient(90deg, #2f4c78, #3a5d8a 50%, #2f4c78);
        border: 2px solid #3b414c;
        border-radius: 2px;
    }

    .slider span {
        width: 13px;
        height: 6px;
        background: #8dbfe9;
    }

    .chord-right {
        flex: 1;
        box-sizing: border-box;
        padding: 11px 0 0 15px;
        border-left: 2px solid #a8a8a8;
    }

    .seq-strip {
        width: 380px;
        height: 18px;
        margin-left: 2px;
        background: #c9c9c9;
    }

    .seq-strip .strip-label {
        margin-left: 8px;
        font-size: 12.500px;
        letter-spacing: 1.050px;
    }

    .pseq {
        display: flex;
        margin: 6px 0 0 -1px;
    }

    .pseq-labels {
        display: flex;
        flex-direction: column;
        gap: 3px;
        padding-top: 4px;
    }

    .pseq-labels span {
        box-sizing: border-box;
        width: 49px;
        height: 18px;
        padding-left: 2px;
        background: #d8d8d8;
        border: 1px solid #9e9e9e;
        border-right: 0;
        border-radius: 2px 0 0 2px;
        font-size: 8.800px;
        line-height: 16px;
        color: #333;
    }

    .pseq-grid {
        display: grid;
        grid-template-columns: repeat(9, 18px);
        grid-auto-rows: 20.500px;
        box-sizing: border-box;
        width: 240px;
        height: 66px;
        padding: 2px 0 0 0;
        background:
            repeating-linear-gradient(90deg, rgba(0, 0, 0, .07) 0 1px, transparent 1px 2px),
            repeating-linear-gradient(0deg, rgba(0, 0, 0, .07) 0 1px, transparent 1px 2px),
            #2f5d92;
        border: 2px solid #3a3a32;
        border-bottom-color: #8ea3de;
    }

    .pseq-grid span {
        font-size: 11.500px;
        line-height: 20px;
        text-align: center;
        color: #eef4fa;
    }

    .pseq-nums {
        display: grid;
        grid-template-columns: repeat(9, 18px);
        margin: 2px 0 0 50px;
        font-size: 8.500px;
        text-align: center;
        color: #a3a3a3;
    }

    .foot {
        height: 19px;
        background: linear-gradient(#6c6c6c 0, #cfcfcf 3px, #f4f4f4 5px, #e3e3e3 7px, #e8e8e8);
    }

    /* context menus */
    .menu {
        position: absolute;
        box-sizing: border-box;
        background: #f9f9f9;
        border-radius: 8px;
        box-shadow: 0 2px 8px rgba(0, 0, 0, .25);
        font-family: "Open Sans", sans-serif;
        font-size: 11.500px;
        letter-spacing: -.2px;
        color: #1a1a1a;
    }

    .item {
        position: relative;
        height: 22px;
        line-height: 22px;
        white-space: nowrap;
    }

    .item.hot {
        background: #f0f0f0;
        border-radius: 4px;
    }

    .arrow {
        position: absolute;
        top: 7px;
        width: 6px;
        height: 10px;
    }

    .menu-root {
        left: 1042px;
        top: 324px;
        width: 136px;
        height: 102px;
        padding: 3px 5px;
    }

    .menu-root .item {
        padding-left: 32px;
    }

    .menu-root .arrow {
        right: 10px;
    }

    .sep {
        height: 1px;
        margin: 4px 0;
        background: #e5e5e5;
    }

    .menu-sub {
        left: 1173px;
        top: 378px;
        width: 144px;
        height: 92px;
        padding: 2px 5px;
        border-radius: 8px 0 0 8px;
    }

    .menu-sub .item {
        padding-left: 32px;
    }

    .menu-sub .arrow {
        right: 10px;
    }

    .menu-list {
        left: 1312px;
        top: 282px;
        width: 239px;
        height: 798px;
        padding: 3px 0 0 38px;
        border-radius: 8px 8px 0 0;
        background: #fbfbfb;
    }
</style>
